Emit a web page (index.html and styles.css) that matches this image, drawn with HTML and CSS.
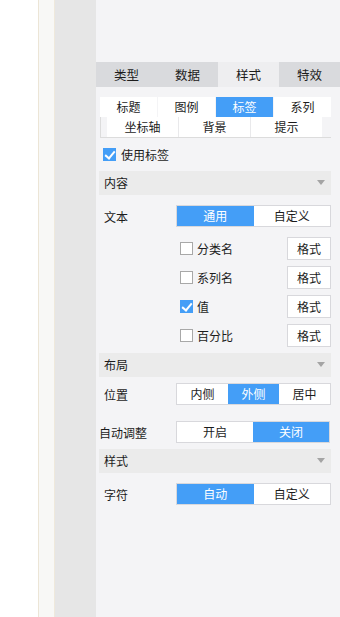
FILE: index.html
```html
<!DOCTYPE html>
<html lang="zh-CN">
<head>
  <meta charset="UTF-8" />
  <meta name="viewport" content="width=device-width, initial-scale=1.0"/>
  <title>图表样式</title>
  <link rel="stylesheet" href="styles.css">
</head>
<body>
  <div class="page">
    <div class="blank"></div>
    <div class="rail"></div>
    <div class="sidebar"></div>

    <div class="panel">
      <ul class="main-tabs">
        <li class="main-tab">类型</li>
        <li class="main-tab">数据</li>
        <li class="main-tab active">样式</li>
        <li class="main-tab">特效</li>
      </ul>

      <div class="sub-tabs">
        <div class="sub-row">
          <div class="sub-tab">标题</div>
          <div class="sub-tab">图例</div>
          <div class="sub-tab active">标签</div>
          <div class="sub-tab">系列</div>
        </div>
        <div class="sub-row second">
          <div class="sub-tab">坐标轴</div>
          <div class="sub-tab">背景</div>
          <div class="sub-tab">提示</div>
        </div>
      </div>

      <label class="check-line">
        <span class="box checked"></span>使用标签
      </label>

      <div class="section-head first">内容<span class="caret"></span></div>

      <div class="field">
        <span class="field-label">文本</span>
        <div class="toggle">
          <span class="opt on">通用</span>
          <span class="opt">自定义</span>
        </div>
      </div>

      <div class="items">
        <div class="item">
          <span class="box"></span><span class="item-name">分类名</span>
          <button class="fmt">格式</button>
        </div>
        <div class="item">
          <span class="box"></span><span class="item-name">系列名</span>
          <button class="fmt">格式</button>
        </div>
        <div class="item">
          <span class="box checked"></span><span class="item-name">值</span>
          <button class="fmt">格式</button>
        </div>
        <div class="item">
          <span class="box"></span><span class="item-name">百分比</span>
          <button class="fmt">格式</button>
        </div>
      </div>

      <div class="section-head">布局<span class="caret"></span></div>

      <div class="field tight">
        <span class="field-label">位置</span>
        <div class="toggle">
          <span class="opt">内侧</span>
          <span class="opt on">外侧</span>
          <span class="opt">居中</span>
        </div>
      </div>

      <div class="field loose">
        <span class="field-label wide">自动调整</span>
        <div class="toggle narrow">
          <span class="opt">开启</span>
          <span class="opt on">关闭</span>
        </div>
      </div>

      <div class="section-head">样式<span class="caret"></span></div>

      <div class="field">
        <span class="field-label">字符</span>
        <div class="toggle">
          <span class="opt on">自动</span>
          <span class="opt">自定义</span>
        </div>
      </div>
    </div>
  </div>
</body>
</html>
```

FILE: styles.css
```css
body {
  margin: 0;
  font-family: "Noto Sans CJK SC", "Noto Sans", sans-serif;
  font-size: 12px;
  color: #1c1c1c;
  background: #fff;
}

.page {
  display: flex;
  height: 617px;
}

.blank {
  width: 38px;
  background: #fff;
}

.rail {
  width: 15px;
  background: #f8f8f6;
  border-left: 1px solid #ece5d6;
  border-right: 1px solid #efe9dc;
}

.sidebar {
  width: 41px;
  background: #e6e6e6;
}

.panel {
  flex: 1;
  background: #f4f4f6;
  padding: 62px 9px 0 3px;
}

/* top tabs */
.main-tabs {
  display: flex;
  list-style: none;
  margin: 0 -9px 0 -3px;
  padding: 0;
}

.main-tab {
  width: 61px;
  height: 25px;
  line-height: 25px;
  text-align: center;
  font-size: 12.5px;
  background: #d9dadd;
}

.main-tab.active {
  background: #eeeef0;
}

/* sub tabs */
.sub-tabs {
  margin: 10px 0 0 1px;
}

.sub-row {
  display: flex;
  gap: 1px;
}

.sub-tab {
  width: 57px;
  height: 20px;
  line-height: 20px;
  text-align: center;
  background: #fff;
}

.sub-tab.active {
  background: #449ef7;
  color: #fff;
}

.sub-row.second {
  width: 224px;
  padding-left: 6px;
  border-left: 1px solid #dcdcdc;
  border-bottom: 1px solid #dcdcdc;
  background: linear-gradient(#e9e9eb, #e9e9eb) no-repeat 6px 0 / 215px 100%;
}

.sub-row.second .sub-tab {
  width: 71px;
}

/* checkbox */
.box {
  display: inline-block;
  box-sizing: border-box;
  width: 13px;
  height: 13px;
  border: 1px solid #a8a8a8;
  background: #fff;
  position: relative;
  flex-shrink: 0;
}

.box.checked {
  border-color: #449ef7;
  background: #449ef7;
}

.box.checked::after {
  content: "";
  position: absolute;
  left: 3px;
  top: 0;
  width: 4px;
  height: 8px;
  border-right: 2px solid #fff;
  border-bottom: 2px solid #fff;
  transform: rotate(40deg);
}

.check-line {
  display: flex;
  align-items: center;
  gap: 5px;
  height: 16px;
  margin: 8px 0 0 4px;
}

/* section headers */
.section-head {
  position: relative;
  height: 24px;
  line-height: 24px;
  padding-left: 5px;
  background: #ebebeb;
  margin-top: 6px;
}

.section-head.first {
  margin-top: 9px;
}

.caret {
  position: absolute;
  right: 6px;
  top: 9px;
  width: 0;
  height: 0;
  border-left: 4px solid transparent;
  border-right: 4px solid transparent;
  border-top: 5px solid #a4a4a4;
}

/* fields */
.field {
  display: flex;
  align-items: center;
  margin-top: 10px;
  padding-left: 5px;
}

.field.tight {
  margin-top: 6px;
}

.field.loose {
  margin-top: 16px;
}

.field-label {
  width: 72px;
}

.field-label.wide {
  margin-left: -5px;
  width: 77px;
}

.toggle {
  flex: 1;
  display: flex;
  height: 22px;
  box-sizing: border-box;
  border: 1px solid #d8d8dc;
  background: #fff;
}

.toggle.narrow {
  margin-right: 1px;
}

.opt {
  flex: 1;
  text-align: center;
  line-height: 20px;
}

.opt.on {
  background: #449ef7;
  color: #fff;
}

/* item rows */
.items {
  margin-top: 10px;
  padding-left: 81px;
  display: flex;
  flex-direction: column;
  gap: 6px;
}

.item {
  display: flex;
  align-items: center;
  height: 23px;
}

.item-name {
  flex: 1;
  margin-left: 4px;
}

.fmt {
  width: 44px;
  height: 23px;
  padding: 0;
  border: 1px solid #d8d8dc;
  background: #fff;
  font: inherit;
  color: inherit;
}
```
